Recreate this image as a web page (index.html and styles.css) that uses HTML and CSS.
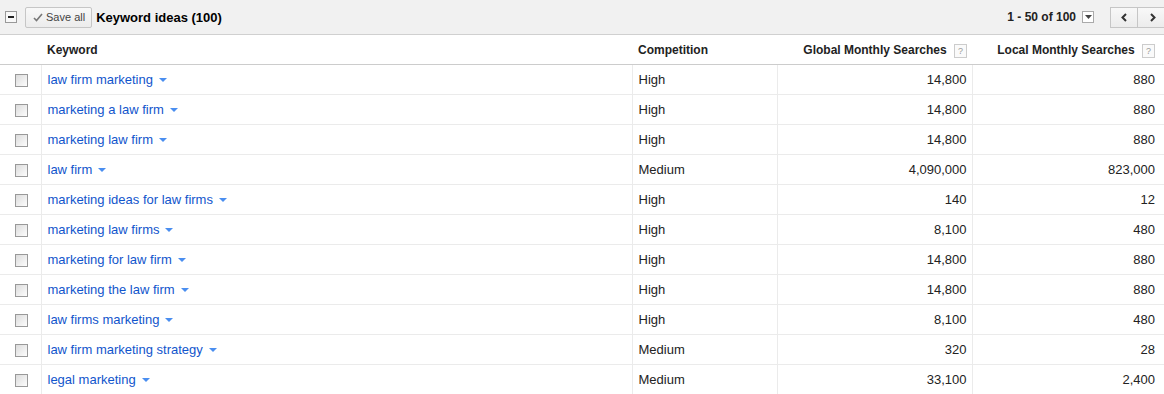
FILE: index.html
```html
<!DOCTYPE html>
<html lang="en">
<head>
  <meta charset="UTF-8">
  <title>Keyword ideas</title>
  <link rel="stylesheet" href="styles.css">
</head>
<body>
  <div class="toolbar">
    <span class="collapse"></span>
    <button class="save-btn">
      <svg width="10" height="9" viewBox="0 0 10 9"><path d="M1 5 L3.5 7.5 L9 1" fill="none" stroke="#777" stroke-width="1.6"/></svg>
      Save all
    </button>
    <span class="title">Keyword ideas (100)</span>
    <span class="spacer"></span>
    <span class="range">1 - 50 of 100</span>
    <span class="range-select">
      <svg width="7" height="4" viewBox="0 0 7 4"><path d="M0 0 H7 L3.5 4 Z" fill="#444"/></svg>
    </span>
    <div class="pager">
      <button class="page-btn"><svg width="6" height="9" viewBox="0 0 6 9"><path d="M5 1 L1.5 4.5 L5 8" fill="none" stroke="#333" stroke-width="2"/></svg></button>
      <button class="page-btn"><svg width="6" height="9" viewBox="0 0 6 9"><path d="M1 1 L4.5 4.5 L1 8" fill="none" stroke="#333" stroke-width="2"/></svg></button>
    </div>
  </div>

  <table class="ideas">
    <thead>
      <tr>
        <th class="col-check"></th>
        <th class="col-keyword">Keyword</th>
        <th class="col-comp">Competition</th>
        <th class="col-global num">Global Monthly Searches <span class="help">?</span></th>
        <th class="col-local num">Local Monthly Searches <span class="help">?</span></th>
      </tr>
    </thead>
    <tbody>
      <tr><td class="col-check"><span class="box"></span></td><td><a href="#">law firm marketing</a><span class="caret"></span></td><td>High</td><td class="num">14,800</td><td class="num">880</td></tr>
      <tr><td class="col-check"><span class="box"></span></td><td><a href="#">marketing a law firm</a><span class="caret"></span></td><td>High</td><td class="num">14,800</td><td class="num">880</td></tr>
      <tr><td class="col-check"><span class="box"></span></td><td><a href="#">marketing law firm</a><span class="caret"></span></td><td>High</td><td class="num">14,800</td><td class="num">880</td></tr>
      <tr><td class="col-check"><span class="box"></span></td><td><a href="#">law firm</a><span class="caret"></span></td><td>Medium</td><td class="num">4,090,000</td><td class="num">823,000</td></tr>
      <tr><td class="col-check"><span class="box"></span></td><td><a href="#">marketing ideas for law firms</a><span class="caret"></span></td><td>High</td><td class="num">140</td><td class="num">12</td></tr>
      <tr><td class="col-check"><span class="box"></span></td><td><a href="#">marketing law firms</a><span class="caret"></span></td><td>High</td><td class="num">8,100</td><td class="num">480</td></tr>
      <tr><td class="col-check"><span class="box"></span></td><td><a href="#">marketing for law firm</a><span class="caret"></span></td><td>High</td><td class="num">14,800</td><td class="num">880</td></tr>
      <tr><td class="col-check"><span class="box"></span></td><td><a href="#">marketing the law firm</a><span class="caret"></span></td><td>High</td><td class="num">14,800</td><td class="num">880</td></tr>
      <tr><td class="col-check"><span class="box"></span></td><td><a href="#">law firms marketing</a><span class="caret"></span></td><td>High</td><td class="num">8,100</td><td class="num">480</td></tr>
      <tr><td class="col-check"><span class="box"></span></td><td><a href="#">law firm marketing strategy</a><span class="caret"></span></td><td>Medium</td><td class="num">320</td><td class="num">28</td></tr>
      <tr><td class="col-check"><span class="box"></span></td><td><a href="#">legal marketing</a><span class="caret"></span></td><td>Medium</td><td class="num">33,100</td><td class="num">2,400</td></tr>
    </tbody>
  </table>
</body>
</html>
```

FILE: styles.css
```css
body {
  font-family: Arial, "Liberation Sans", sans-serif;
  font-size: 13px;
  color: #222;
  margin: 0;
  padding: 0;
  background-color: #fff;
  overflow: hidden;
}

.toolbar {
  display: flex;
  align-items: center;
  height: 34px;
  background-color: #f1f1f1;
  border-bottom: 1px solid #d0d0d0;
  padding-left: 5px;
  margin-right: -4px;
}

.collapse {
  position: relative;
  width: 10px;
  height: 10px;
  border: 1px solid #999;
  background-color: #f8f8f8;
  margin-right: 8px;
}

.collapse::after {
  content: "";
  position: absolute;
  left: 2px;
  top: 4px;
  width: 6px;
  height: 2px;
  background-color: #222;
}

.save-btn {
  display: flex;
  align-items: center;
  gap: 3px;
  height: 21px;
  padding: 0 6px 0 7px;
  border: 1px solid #c6c6c6;
  border-radius: 2px;
  background: linear-gradient(#f8f8f8, #ececec);
  font-family: inherit;
  font-size: 11px;
  color: #444;
  margin-right: 4px;
}

.title {
  font-weight: bold;
  font-size: 13px;
  color: #000;
}

.spacer {
  flex: 1;
}

.range {
  font-weight: bold;
  font-size: 12px;
  color: #222;
}

.range-select {
  display: flex;
  align-items: center;
  justify-content: center;
  width: 10px;
  height: 10px;
  border: 1px solid #aaa;
  background-color: #fff;
  margin-left: 6px;
  margin-right: 16px;
}

.pager {
  display: flex;
}

.page-btn {
  display: flex;
  align-items: center;
  justify-content: center;
  width: 28px;
  height: 21px;
  padding: 0;
  border: 1px solid #c6c6c6;
  background: linear-gradient(#f8f8f8, #ececec);
}

.page-btn + .page-btn {
  border-left: none;
  width: 30px;
}

.ideas {
  width: 100%;
  border-collapse: collapse;
  table-layout: fixed;
}

.ideas th,
.ideas td {
  box-sizing: border-box;
}

.ideas th {
  height: 29px;
  padding: 2px 6px 0;
  text-align: left;
  font-size: 12px;
  font-weight: bold;
  color: #222;
  border-bottom: 1px solid #ccc;
  white-space: nowrap;
}

.ideas td {
  height: 30px;
  padding: 0 6px;
  border-bottom: 1px solid #ebebeb;
  border-left: 1px solid #ebebeb;
  white-space: nowrap;
}

.ideas td.col-check {
  border-left: none;
  text-align: center;
  padding: 0 0 0 2px;
}

.col-check { width: 41px; }
.col-keyword { width: 591px; }
.col-comp { width: 145px; }
.col-global { width: 195px; }

.ideas .num {
  text-align: right;
  padding-right: 5px;
}

.ideas td:last-child,
.ideas th:last-child {
  padding-right: 9px;
}

.help {
  display: inline-block;
  width: 11px;
  height: 12px;
  line-height: 12px;
  margin-left: 4px;
  border: 1px solid #ccc;
  font-size: 9px;
  font-weight: normal;
  color: #999;
  text-align: center;
  vertical-align: middle;
  background-color: #fafafa;
}

.box {
  display: inline-block;
  width: 11px;
  height: 11px;
  border: 1px solid #999;
  background: linear-gradient(135deg, #dcdcdc, #fdfdfd);
  vertical-align: middle;
}

.ideas a {
  color: #15c;
  text-decoration: none;
}

.caret {
  display: inline-block;
  width: 0;
  height: 0;
  border-left: 4px solid transparent;
  border-right: 4px solid transparent;
  border-top: 4px solid #4a8ef0;
  margin-left: 6px;
  vertical-align: middle;
}
```
